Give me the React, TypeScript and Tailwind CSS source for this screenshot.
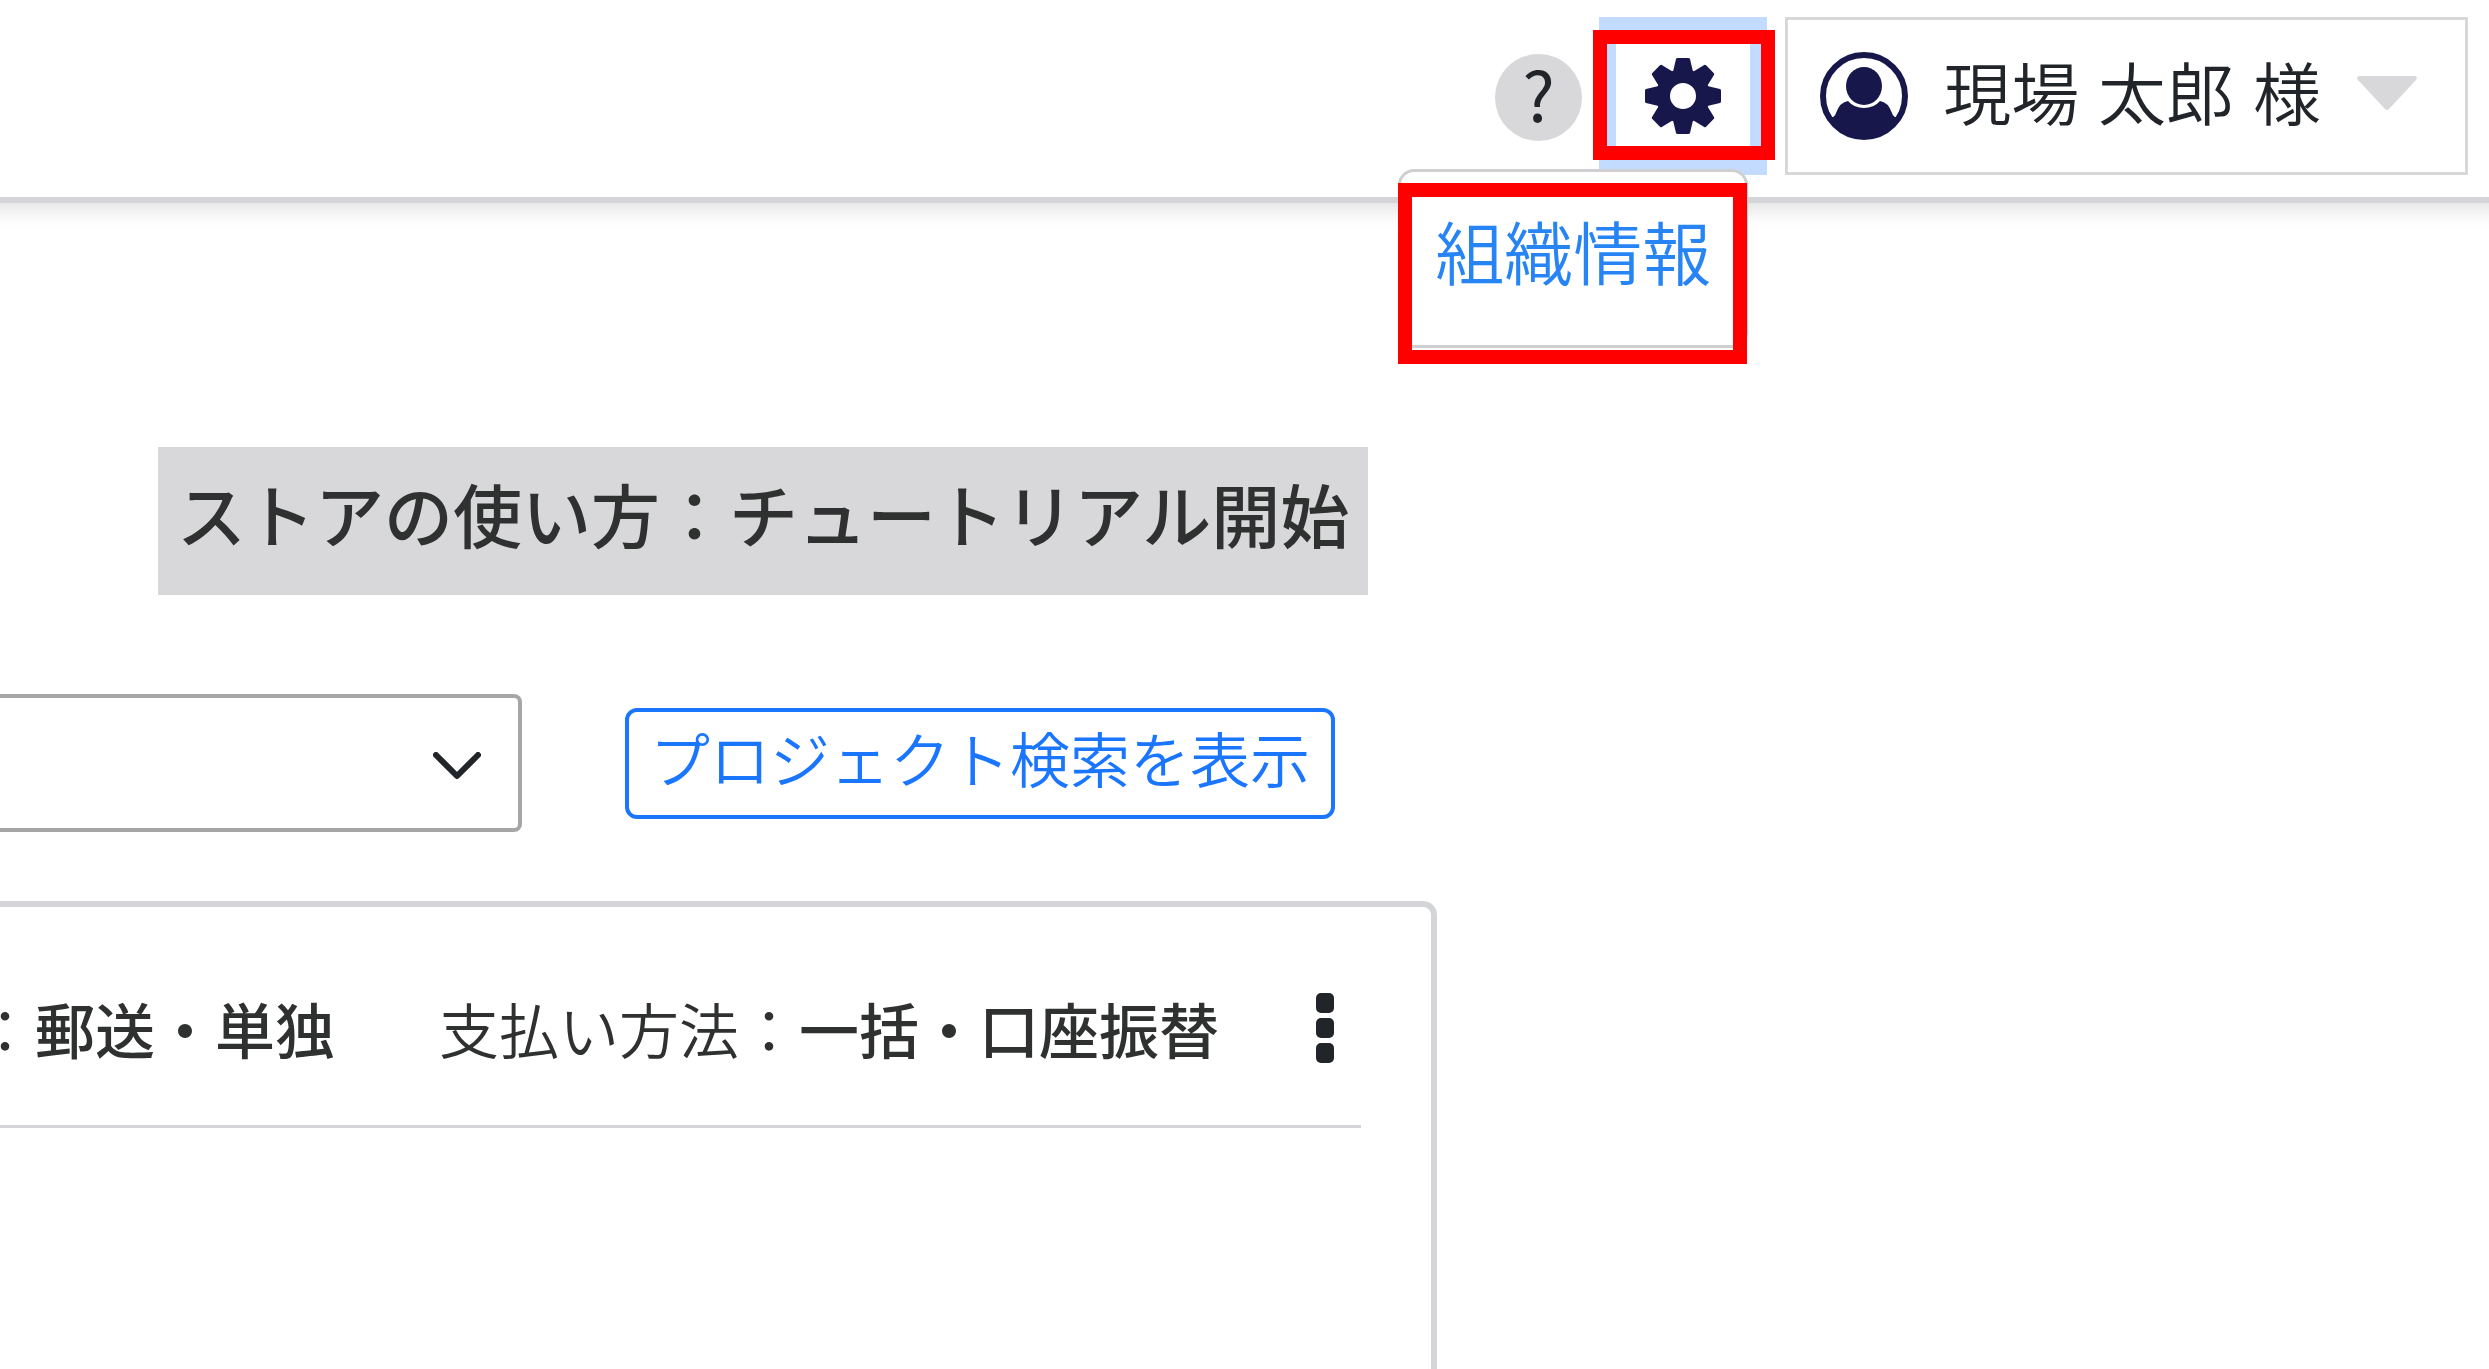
import { useState } from 'react'

// Eight square teeth around a thick ring
const teeth = [0, 45, 90, 135, 180, 225, 270, 315]

function GearIcon() {
  return (
    <svg viewBox="0 0 76 76" className="h-[76px] w-[76px]" fill="#17174b" aria-hidden="true">
      {teeth.map((angle) => (
        <path key={angle} d="M27 18 31 1Q31 0 33 0H43Q45 0 45 1L49 18Z" transform={`rotate(${angle} 38 38)`} />
      ))}
      <circle cx="38" cy="38" r="20" fill="none" stroke="#17174b" strokeWidth="14" />
    </svg>
  )
}

function UserIcon() {
  return (
    <svg viewBox="0 0 88 88" className="h-[88px] w-[88px] shrink-0" fill="#17174b" aria-hidden="true">
      <circle cx="44" cy="44" r="41" fill="none" stroke="#17174b" strokeWidth="6" />
      <ellipse cx="44" cy="34" rx="18" ry="19" />
      <path d="M8 66Q15 66 16 61Q20 50 28 49Q34 56 44 56Q54 56 60 49Q68 50 72 61Q73 66 80 66Q66 87 44 87Q22 87 8 66Z" />
    </svg>
  )
}

function Header() {
  const [open, setOpen] = useState(true)

  return (
    <header className="relative z-10 flex h-[203px] items-start justify-end border-b-[6px] border-[#d4d5d8] bg-white pt-[17px] pr-[21px] shadow-[0_-14px_20px_20px_rgba(0,0,0,0.13)]">
      <button
        type="button"
        aria-label="ヘルプ"
        className="mt-[37px] mr-[17px] flex h-[87px] w-[87px] items-center justify-center rounded-full bg-[#d8d8da] pb-[10px] text-[68px] leading-none text-[#212529]"
      >
        ?
      </button>

      {/* Settings button with its menu */}
      <div className="relative mr-[18px]">
        <button
          type="button"
          aria-label="設定"
          aria-expanded={open}
          onClick={() => setOpen(!open)}
          className="flex h-[158px] w-[168px] items-center justify-center border-[17px] border-[#c2dbff] bg-white"
        >
          <GearIcon />
        </button>
        <div className="pointer-events-none absolute top-[13px] -left-[6px] h-[130px] w-[182px] border-[14px] border-[#ff0000]" />
        {open && (
          <div className="absolute top-[152px] right-[19px] h-[179px] w-[350px] rounded-[16px] border-[3px] border-[#cfcfd1] bg-white pt-[38px]">
            <a
              href="#organization"
              className="block text-center text-[69px] leading-[80px] font-[350] whitespace-nowrap text-[#2684f5]"
            >
              組織情報
            </a>
            <div className="pointer-events-none absolute top-[11px] -left-[3px] h-[181px] w-[349px] border-[14px] border-[#ff0000]" />
          </div>
        )}
      </div>

      <button
        type="button"
        className="flex h-[158px] items-center border-[3px] border-[#d8d8db] bg-white pr-[48px] pl-[32px] font-['Liberation_Sans','Noto_Sans_CJK_JP',sans-serif] text-[68px] leading-none font-[350] whitespace-nowrap text-[#212529]"
      >
        <UserIcon />
        <span className="ml-[35px]">現場 太郎 様</span>
        <svg viewBox="0 0 60 34" className="mb-[6px] ml-[36px] h-[34px] w-[60px]" fill="#d8d8db" aria-hidden="true">
          <path d="M2 0H58Q61 1 59 4L32 33Q30 35 28 33L1 4Q-1 1 2 0Z" />
        </svg>
      </button>
    </header>
  )
}

function ProjectCard() {
  return (
    <section className="mt-[69px] h-[480px] w-[1437px] rounded-tr-[14px] border-t-[6px] border-r-[6px] border-[#d4d5d8]">
      <div className="mr-[70px] flex h-[221px] items-center justify-end border-b-[3px] border-[#d4d5d8] pt-6 pr-[27px] text-[60px] leading-[72px] font-[350] whitespace-nowrap text-[#2f3030]">
        <p>
          ：<b className="font-medium">郵送・単独</b>
        </p>
        <p className="ml-[104px]">
          支払い方法：<b className="font-medium">一括・口座振替</b>
        </p>
        <button type="button" aria-label="メニュー" className="ml-[97px]">
          <svg viewBox="0 0 18 70" className="h-[70px] w-[18px]" fill="#212529" aria-hidden="true">
            <rect width="18" height="20" rx="5" />
            <rect y="25" width="18" height="20" rx="5" />
            <rect y="50" width="18" height="20" rx="5" />
          </svg>
        </button>
      </div>
    </section>
  )
}

export default function App() {
  return (
    <div className="min-h-screen overflow-hidden bg-white font-['Noto_Sans_CJK_JP',sans-serif]">
      <Header />
      <main className="pt-[244px]">
        <button
          type="button"
          className="ml-[158px] block h-[148px] bg-[#d8d8db] px-[19px] pb-4 text-[69px] leading-[132px] font-medium whitespace-nowrap text-[#2f3030]"
        >
          ストアの使い方：チュートリアル開始
        </button>

        <div className="mt-[99px] flex items-center">
          <div className="relative w-[522px]">
            <select
              aria-label="プロジェクト"
              className="block h-[138px] w-full appearance-none rounded-r-[8px] border-y-[4px] border-r-[4px] border-[#a6a6a6] bg-white"
            />
            <svg
              viewBox="0 0 48 28"
              className="pointer-events-none absolute top-[58px] right-[41px] h-[28px] w-[48px]"
              fill="none"
              stroke="#212529"
              strokeWidth="6"
              strokeLinecap="round"
              strokeLinejoin="round"
              aria-hidden="true"
            >
              <path d="M3 3 24 24 45 3" />
            </svg>
          </div>
          <button
            type="button"
            className="ml-[103px] h-[111px] rounded-[12px] border-[4px] border-[#1a75ff] px-[21px] pb-3 text-[60px] leading-[90px] font-[350] whitespace-nowrap text-[#1a75ff]"
          >
            プロジェクト検索を表示
          </button>
        </div>

        <ProjectCard />
      </main>
    </div>
  )
}
